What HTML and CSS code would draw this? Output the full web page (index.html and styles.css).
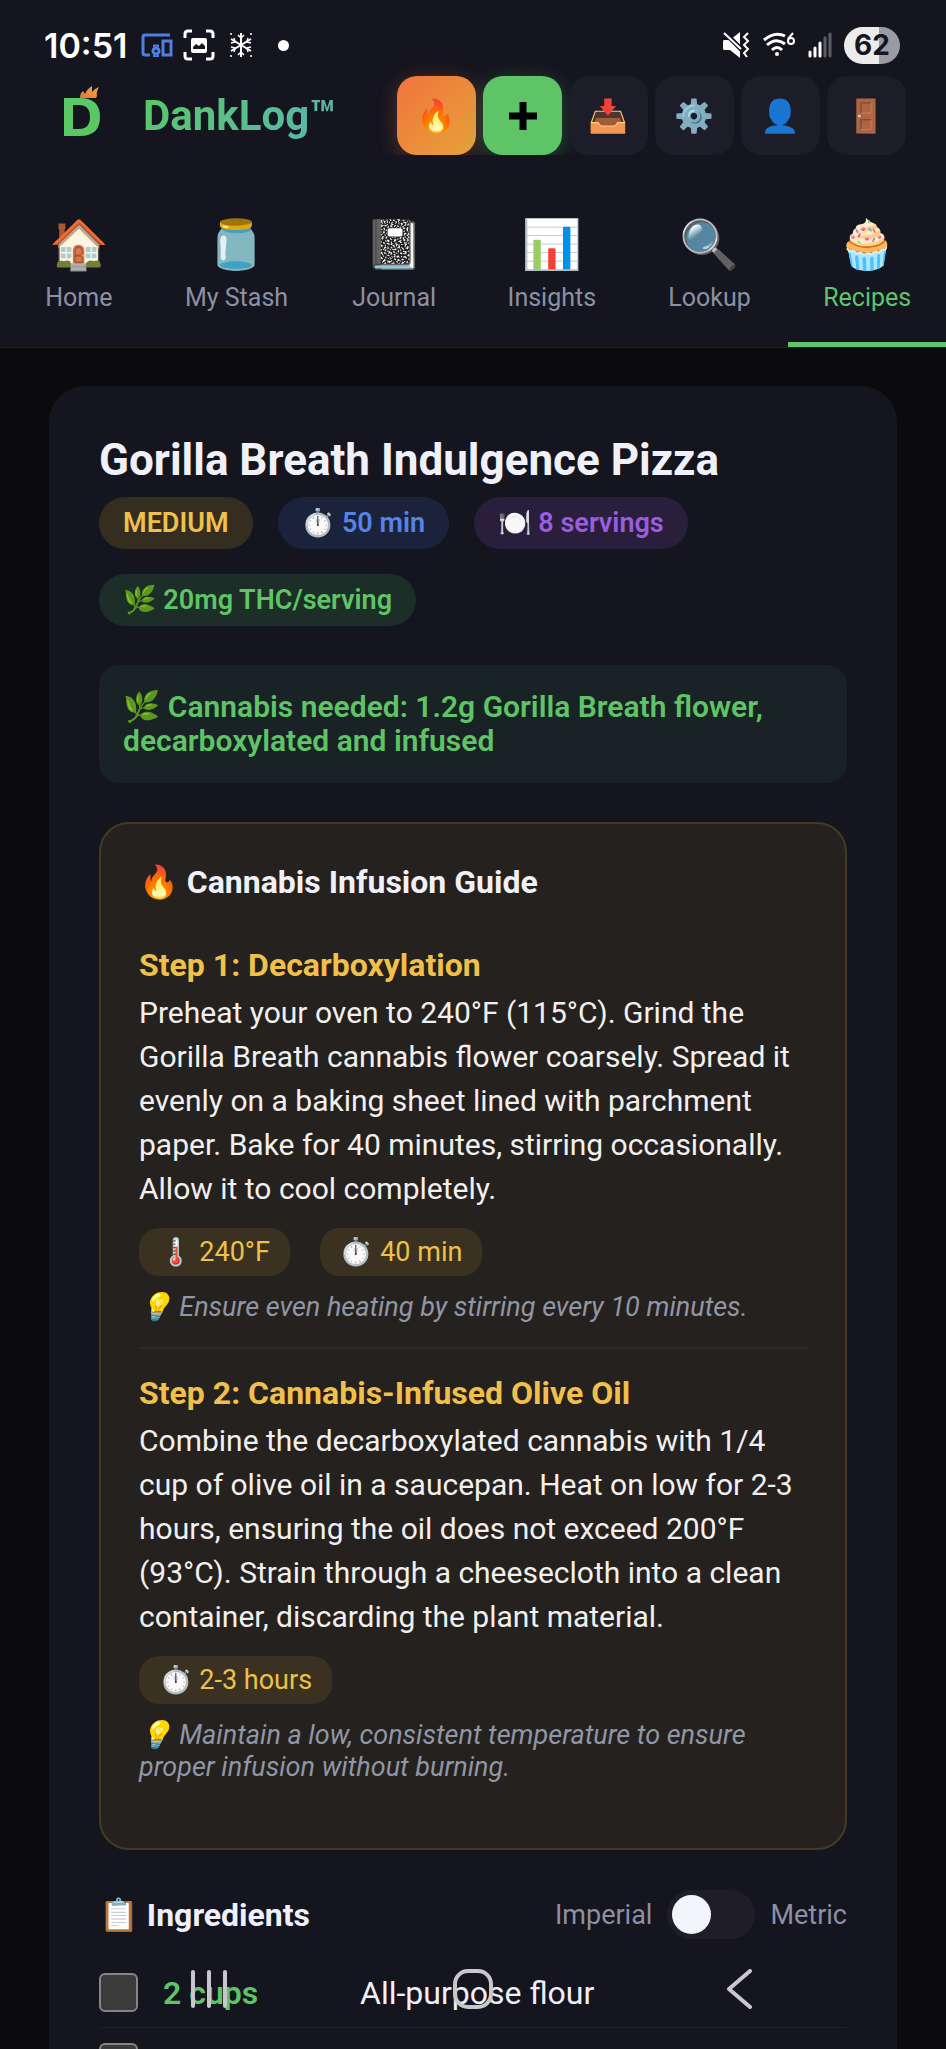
FILE: index.html
```
<!DOCTYPE html>
<html lang="en">
<head>
    <meta charset="UTF-8">
    <meta name="viewport" content="width=device-width, initial-scale=1">
    <title>DankLog - Recipes</title>
    <link rel="stylesheet" href="styles.css">
</head>
<body>
<div class="app">
    <div class="statusbar">
        <div class="status-group">
            <span class="clock">10:51</span>
            <!-- connected devices -->
            <svg width="32" height="24" viewBox="0 0 32 24" fill="none" stroke="#4f7fe0" stroke-width="3">
                <path d="M29 2H4Q2 2 2 4V20Q2 22 4 22H9"/>
                <rect x="22" y="8" width="8" height="14"/>
                <circle cx="15" cy="18" r="3"/>
                <path d="M13 14V12.500H17V14M13 22V23.500H17V22" stroke-width="2"/>
            </svg>
            <!-- screenshot -->
            <svg width="32" height="32" viewBox="0 0 32 32" fill="none" stroke="#fff" stroke-width="3">
                <path d="M2 9V5Q2 2 5 2H9M23 2H27Q30 2 30 5V9M30 23V27Q30 30 27 30H23M9 30H5Q2 30 2 27V23"/>
                <rect x="8" y="9" width="16" height="15" rx="2" fill="#fff" stroke="none"/>
                <path d="M10 20V18L13 15L16 17L19 14L22 17V20Z" fill="#15151f" stroke="none"/>
            </svg>
            <!-- snowflake -->
            <svg class="icon-snow" width="24" height="26" viewBox="0 0 24 26" fill="none" stroke="#fff" stroke-width="2">
                <path d="M12 1V25M2 7L22 19M22 7L2 19"/>
                <path d="M9 3L12 6L15 3M9 23L12 20L15 23M2 11L6 10L5 6M22 11L18 10L19 6M2 15L6 16L5 20M22 15L18 16L19 20" stroke-width="1.500"/>
                <path d="M2 1V3M22 1V3M2 23V25M22 23V25" stroke-width="1.500"/>
            </svg>
            <span class="dot"></span>
        </div>
        <div class="status-group status-right">
            <!-- sound off, vibrate -->
            <svg width="28" height="28" viewBox="0 0 28 28">
                <path d="M2 9H8L18 1V27L8 19H2Q1 19 1 17V11Q1 9 2 9Z" fill="#fff"/>
                <path d="M1 0L21 20" stroke="#15151f" stroke-width="5"/>
                <path d="M2 2L19 18" stroke="#fff" stroke-width="2"/>
                <path d="M26 2L22 6L26 10L22 14L26 18L22 22L25 26" fill="none" stroke="#fff" stroke-width="2"/>
            </svg>
            <!-- wifi 6 -->
            <svg width="34" height="26" viewBox="0 0 34 26" fill="none" stroke="#fff" stroke-width="3">
                <path d="M2 8Q13 -1 23 4M5 13Q14 5 23 12M10 18Q15 13 20 18"/>
                <circle cx="15" cy="22" r="2" fill="#fff" stroke="none"/>
                <path d="M31 1L26 7" stroke-width="2"/>
                <circle cx="29" cy="9" r="3" stroke-width="2"/>
            </svg>
            <!-- signal -->
            <svg width="24" height="26" viewBox="0 0 24 26" stroke-width="3" stroke-linecap="round">
                <path d="M2 20V24M7 16V24M12 11V24" stroke="#fff"/>
                <path d="M17 6V24M22 2V24" stroke="#5c5c66"/>
            </svg>
            <span class="battery">62</span>
        </div>
    </div>

    <header class="header">
        <a class="brand" href="#">
            <svg width="40" height="60" viewBox="0 0 40 60">
                <defs>
                    <linearGradient id="flame" x1="0" y1="1" x2="1" y2="0">
                        <stop offset="0" stop-color="#e8703a"/>
                        <stop offset="1" stop-color="#f0b040"/>
                    </linearGradient>
                </defs>
                <path d="M2 12H18Q38 12 38 31Q38 50 18 50H2ZM11 19V43H17Q28 43 28 31Q28 19 17 19Z" fill="#5ac864" fill-rule="evenodd"/>
                <path d="M18 12Q18 7 21 5L23 8Q25 3 30 0L30 6Q32 3 37 1Q34 6 35 10L34 12Z" fill="url(#flame)"/>
            </svg>
            <span class="brand-name">DankLog™</span>
        </a>
        <div class="actions">
            <button class="action action-fire" aria-label="Log session">🔥</button>
            <button class="action action-add" aria-label="Add">
                <svg width="28" height="28" viewBox="0 0 28 28"><path d="M14 0V28M0 14H28" stroke="#000" stroke-width="7"/></svg>
            </button>
            <button class="action" aria-label="Import">📥</button>
            <button class="action" aria-label="Settings">⚙️</button>
            <button class="action" aria-label="Profile">👤</button>
            <button class="action" aria-label="Log out">🚪</button>
        </div>
    </header>

    <nav class="tabs">
        <a class="tab" href="#"><span class="tab-icon">🏠</span>Home</a>
        <a class="tab" href="#"><span class="tab-icon">🫙</span>My Stash</a>
        <a class="tab" href="#"><span class="tab-icon">📓</span>Journal</a>
        <a class="tab" href="#"><span class="tab-icon">📊</span>Insights</a>
        <a class="tab" href="#"><span class="tab-icon">🔍</span>Lookup</a>
        <a class="tab active" href="#"><span class="tab-icon">🧁</span>Recipes</a>
    </nav>

    <main class="content">
        <article class="recipe">
            <h1 class="recipe-title">Gorilla Breath Indulgence Pizza</h1>
            <div class="badges">
                <span class="badge badge-level">MEDIUM</span>
                <span class="badge badge-time">⏱️ 50 min</span>
                <span class="badge badge-servings">🍽️ 8 servings</span>
                <span class="badge badge-thc">🌿 20mg THC/serving</span>
            </div>

            <p class="needed">🌿 Cannabis needed: 1.2g Gorilla Breath flower, decarboxylated and infused</p>

            <section class="guide">
                <h2 class="guide-title">🔥 Cannabis Infusion Guide</h2>
                <div class="step">
                    <h3 class="step-title">Step 1: Decarboxylation</h3>
                    <p class="step-text">Preheat your oven to 240°F (115°C). Grind the Gorilla Breath cannabis flower coarsely. Spread it evenly on a baking sheet lined with parchment paper. Bake for 40 minutes, stirring occasionally. Allow it to cool completely.</p>
                    <div class="pills">
                        <span class="pill">🌡️ 240°F</span>
                        <span class="pill">⏱️ 40 min</span>
                    </div>
                    <p class="tip">💡 Ensure even heating by stirring every 10 minutes.</p>
                </div>
                <div class="step">
                    <h3 class="step-title">Step 2: Cannabis-Infused Olive Oil</h3>
                    <p class="step-text">Combine the decarboxylated cannabis with 1/4 cup of olive oil in a saucepan. Heat on low for 2-3 hours, ensuring the oil does not exceed 200°F (93°C). Strain through a cheesecloth into a clean container, discarding the plant material.</p>
                    <div class="pills">
                        <span class="pill">⏱️ 2-3 hours</span>
                    </div>
                    <p class="tip">💡 Maintain a low, consistent temperature to ensure proper infusion without burning.</p>
                </div>
            </section>

            <section class="ingredients">
                <div class="ingredients-head">
                    <h2 class="ingredients-title">📋 Ingredients</h2>
                    <label class="units">
                        <span>Imperial</span>
                        <input class="switch" type="checkbox" role="switch">
                        <span>Metric</span>
                    </label>
                </div>
                <ul class="ingredient-list">
                    <li>
                        <label class="ingredient">
                            <input class="check" type="checkbox">
                            <span class="amount">2 cups</span>
                            <span>All-purpose flour</span>
                        </label>
                    </li>
                    <li>
                        <label class="ingredient">
                            <input class="check" type="checkbox" aria-label="Next ingredient">
                        </label>
                    </li>
                </ul>
            </section>
        </article>
    </main>

    <div class="sysnav">
        <button class="sysnav-btn" aria-label="Recents">
            <svg width="40" height="40" viewBox="0 0 40 40" stroke="#c8c8cc" stroke-width="4" stroke-linecap="round"><path d="M5 3V37M21 3V37M37 3V37"/></svg>
        </button>
        <button class="sysnav-btn" aria-label="Home">
            <svg width="40" height="40" viewBox="0 0 40 40" fill="none" stroke="#c8c8cc" stroke-width="4"><rect x="2" y="2" width="36" height="36" rx="13"/></svg>
        </button>
        <button class="sysnav-btn" aria-label="Back">
            <svg width="40" height="40" viewBox="0 0 40 40" fill="none" stroke="#c8c8cc" stroke-width="4" stroke-linecap="round" stroke-linejoin="round"><path d="M32 2L11 20L32 38"/></svg>
        </button>
    </div>
</div>
</body>
</html>
```

FILE: styles.css
```
* {
    box-sizing: border-box;
    margin: 0;
    padding: 0;
}

body {
    background: #0a0a0f;
    color: #f0f0f8;
    font-family: Roboto, "Noto Color Emoji", sans-serif;
    font-size: 32px;
}

a {
    color: inherit;
    text-decoration: none;
}

button {
    border: 0;
    background: none;
    color: inherit;
    font-family: inherit;
    cursor: pointer;
}

ul {
    list-style: none;
}

.app {
    display: flex;
    flex-direction: column;
    height: 100vh;
    overflow: hidden;
}

/* status bar */
.statusbar {
    flex: none;
    display: flex;
    justify-content: space-between;
    align-items: center;
    height: 76px;
    padding: 14px 46px 0 44px;
    background: #15151f;
}

.status-group {
    display: flex;
    align-items: center;
    gap: 10px;
}

.status-right {
    gap: 12px;
}

.clock {
    margin-right: 4px;
    color: #fff;
    font-family: Inter, sans-serif;
    font-size: 34px;
    font-weight: 600;
}

.icon-snow {
    margin: 0 15px 0 4px;
}

.dot {
    width: 11px;
    height: 11px;
    border-radius: 50%;
    background: #fff;
}

.battery {
    width: 56px;
    height: 37px;
    border-radius: 19px;
    background: linear-gradient(90deg, #ececec 62%, #9a9aa2 62%);
    color: #15151f;
    font-family: Inter, sans-serif;
    font-size: 28px;
    font-weight: 700;
    line-height: 37px;
    text-align: center;
}

/* header */
.header {
    flex: none;
    display: flex;
    justify-content: space-between;
    align-items: center;
    padding: 0 40px 0 62px;
    background: #15151f;
}

.brand {
    display: flex;
    align-items: center;
    gap: 41px;
}

.brand-name {
    background: linear-gradient(135deg, #5ac864, #5ab4b4);
    background-clip: text;
    -webkit-background-clip: text;
    color: transparent;
    font-size: 42px;
    font-weight: 700;
}

.actions {
    display: flex;
    gap: 7px;
}

.action {
    display: flex;
    justify-content: center;
    align-items: center;
    width: 79px;
    height: 79px;
    border-radius: 20px;
    background: #1d1c29;
    font-size: 32px;
}

.action-fire {
    background: linear-gradient(135deg, #f0743c, #e6a23a);
    box-shadow: 0 4px 20px rgba(240, 116, 60, 0.3);
}

.action-add {
    background: #5ec466;
    box-shadow: 0 4px 20px rgba(94, 196, 102, 0.3);
}

/* tabs */
.tabs {
    flex: none;
    display: grid;
    grid-template-columns: repeat(6, 1fr);
    height: 193px;
    border-bottom: 1px solid #202027;
    background: #15151f;
}

.tab {
    display: flex;
    flex-direction: column;
    align-items: center;
    padding-top: 62px;
    border-bottom: 5px solid transparent;
    color: #8c90a4;
    font-size: 25px;
    line-height: 32px;
}

.tab-icon {
    margin-bottom: 9px;
    font-size: 48px;
    line-height: 56px;
}

.tab.active {
    border-color: #5ec46e;
    color: #5ec46e;
}

/* recipe card */
.content {
    flex: 1;
    min-height: 0;
    overflow: hidden;
    padding: 38px 49px 0;
}

.recipe {
    padding: 50px;
    border-radius: 36px;
    background: #15151f;
}

.recipe-title {
    font-size: 44px;
    font-weight: 700;
    line-height: 48px;
}

.badges {
    display: flex;
    flex-wrap: wrap;
    gap: 25px;
    margin-top: 13px;
}

.badge {
    height: 52px;
    padding: 0 24px;
    border-radius: 26px;
    font-size: 27px;
    font-weight: 600;
    line-height: 52px;
}

.badge-level {
    background: #362d21;
    color: #efc04a;
}

.badge-time {
    background: #1b233c;
    color: #5583e6;
}

.badge-servings {
    background: #291e3b;
    color: #9c5ce0;
}

.badge-thc {
    background: #1d2d27;
    color: #5ec466;
}

.needed {
    margin-top: 39px;
    padding: 25px 24px;
    border-radius: 20px;
    background: #192224;
    color: #5ec466;
    font-size: 30px;
    font-weight: 600;
    line-height: 34px;
}

.guide {
    margin-top: 39px;
    padding: 38px 38px 65px;
    border: 2px solid #453b22;
    border-radius: 30px;
    background: #25211f;
}

.guide-title {
    font-size: 32px;
    font-weight: 700;
    line-height: 40px;
}

.step {
    padding-top: 24px;
}

.step + .step {
    margin-top: 24px;
    border-top: 2px solid #302b23;
}

.guide-title + .step {
    padding-top: 43px;
}

.step-title {
    color: #f0c04a;
    font-size: 32px;
    font-weight: 700;
    line-height: 40px;
}

.step-text {
    margin-top: 6px;
    color: #f2f0ee;
    font-size: 30px;
    line-height: 44px;
}

.pills {
    display: flex;
    gap: 30px;
    margin-top: 17px;
}

.pill {
    height: 48px;
    padding: 0 20px;
    border-radius: 20px;
    background: #3a3120;
    color: #efc04a;
    font-size: 27px;
    line-height: 48px;
}

.tip {
    margin-top: 15px;
    color: #9096a4;
    font-size: 27px;
    font-style: italic;
    line-height: 32px;
}

/* ingredients */
.ingredients-head {
    display: flex;
    justify-content: space-between;
    align-items: center;
    height: 49px;
    margin: 40px 0 19px;
}

.ingredients-title {
    font-size: 32px;
    font-weight: 700;
}

.units {
    display: flex;
    align-items: center;
    gap: 15px;
    color: #8c90a4;
    font-size: 27px;
}

.switch {
    appearance: none;
    width: 88px;
    height: 49px;
    padding: 5px;
    border-radius: 25px;
    background: #1f1d2a;
}

.switch::before {
    content: "";
    display: block;
    width: 39px;
    height: 39px;
    border-radius: 50%;
    background: #f2f5fc;
}

.switch:checked::before {
    margin-left: auto;
}

.ingredient {
    display: flex;
    align-items: center;
    gap: 25px;
    padding: 15px 0;
    border-bottom: 1px solid #1f1f29;
}

.check {
    appearance: none;
    width: 39px;
    height: 39px;
    border: 2px solid #858585;
    border-radius: 6px;
    background: #3b3b3b;
}

.check:checked {
    background: #5ec466;
}

.amount {
    min-width: 172px;
    color: #5ec466;
    font-weight: 600;
}

/* system buttons float over the page */
.sysnav {
    position: fixed;
    left: 0;
    right: 0;
    bottom: 40px;
    display: flex;
    justify-content: center;
    gap: 225px;
}

.sysnav-btn {
    width: 40px;
    height: 40px;
}
```
